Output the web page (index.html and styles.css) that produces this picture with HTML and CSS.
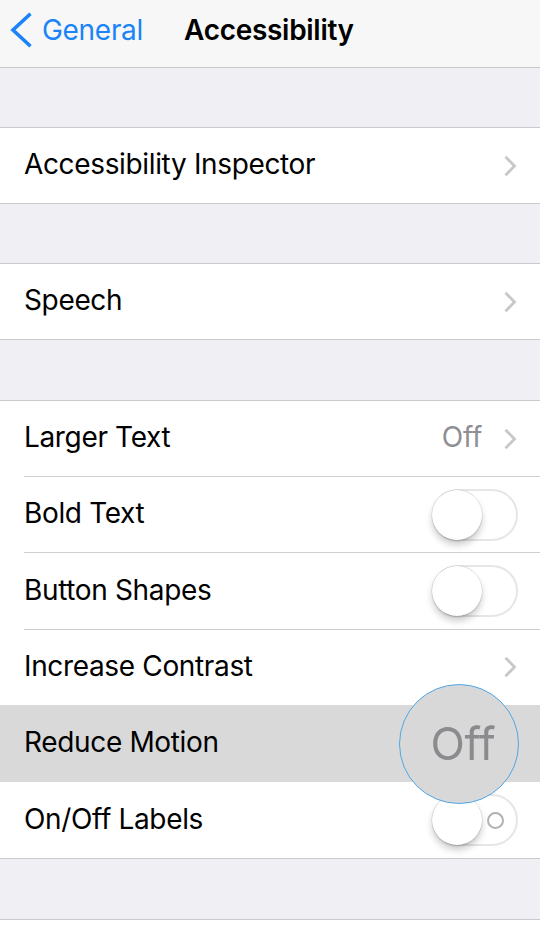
FILE: index.html
```html
<!DOCTYPE html>
<html lang="en">
<head>
<meta charset="utf-8">
<title>Accessibility</title>
<link rel="stylesheet" href="styles.css">
</head>
<body>
<div class="screen">
  <header class="nav">
    <a class="back">
      <svg class="back-chevron" width="24" height="36" viewBox="0 0 24 36"><polyline points="20.5,1.8 3,18 20.5,34.2" fill="none" stroke="#1a84f8" stroke-width="3.6" stroke-linecap="butt" stroke-linejoin="miter"/></svg>
      <span class="back-label">General</span>
    </a>
    <h1 class="title">Accessibility</h1>
  </header>

  <div class="spacer s1"></div>
  <section class="group">
    <div class="row"><span class="label">Accessibility Inspector</span><span class="chev"></span></div>
  </section>

  <div class="spacer s2"></div>
  <section class="group">
    <div class="row"><span class="label">Speech</span><span class="chev"></span></div>
  </section>

  <div class="spacer s3"></div>
  <section class="group">
    <div class="row"><span class="label">Larger Text</span><span class="detail">Off</span><span class="chev"></span></div>
    <div class="row"><span class="label">Bold Text</span><span class="toggle"><span class="knob"></span></span></div>
    <div class="row"><span class="label">Button Shapes</span><span class="toggle"><span class="knob"></span></span></div>
    <div class="row"><span class="label">Increase Contrast</span><span class="chev"></span></div>
    <div class="row selected"><span class="label">Reduce Motion</span>
      <div class="lens"><span class="lens-text">Off</span></div>
    </div>
    <div class="row"><span class="label">On/Off Labels</span><span class="toggle"><span class="knob"></span><span class="ring"></span></span></div>
  </section>

  <div class="spacer s4"></div>
  <div class="bottom"></div>
</div>
</body>
</html>
```

FILE: styles.css
```css
* { box-sizing: border-box; }

html, body {
  margin: 0;
  padding: 0;
  background: #efeff4;
}

.screen {
  width: 540px;
  height: 925px;
  overflow: hidden;
  font-family: Inter, "Noto Sans", "Liberation Sans", sans-serif;
  color: #000;
  background: #efeff4;
}

.nav {
  height: 68px;
  background: #f7f7f7;
  border-bottom: 1px solid #c9c9cc;
  display: flex;
  align-items: flex-start;
  padding-top: 12px;
  position: relative;
}

.back {
  display: flex;
  align-items: center;
  padding-left: 10px;
  height: 36px;
  color: #1a84f8;
}

.back-chevron { display: block; }

.back-label {
  font-size: 28px;
  letter-spacing: -0.3px;
  margin-left: 8px;
}

.title {
  margin: 0 0 0 41px;
  font-size: 28px;
  font-weight: 600;
  letter-spacing: -0.3px;
  line-height: 36px;
  height: 36px;
}

.spacer { height: 59px; }
.s3 { height: 60px; }
.s4 { height: 60px; }

.group {
  background: #fff;
  border-top: 1px solid #c9c9ce;
  border-bottom: 1px solid #c9c9ce;
}

.row {
  height: 75px;
  display: flex;
  align-items: center;
  padding-left: 24px;
  padding-right: 23px;
  position: relative;
}

.row + .row {
  height: 76.4px;
  padding-top: 1px;
  background: linear-gradient(#cfcfd3, #cfcfd3) 24px 0 / calc(100% - 24px) 1px no-repeat;
}

.row.selected {
  background: #d9d9d9;
}
.row.selected + .row { background: #fff; }

.label {
  flex: 1;
  font-size: 28px;
  letter-spacing: -0.35px;
  margin-bottom: 3px;
}

.detail {
  font-size: 28px;
  color: #8e8e93;
  letter-spacing: -0.3px;
  margin-right: 21px;
  margin-bottom: 3px;
}

.chev {
  width: 14px;
  height: 22px;
  background:
    no-repeat center / 14px 22px
    url("data:image/svg+xml;utf8,<svg xmlns='http://www.w3.org/2000/svg' width='14' height='22' viewBox='0 0 14 22'><polyline points='2.5,1.8 11.5,11 2.5,20.2' fill='none' stroke='%23c7c7cc' stroke-width='2.8'/></svg>");
}

.toggle {
  width: 86px;
  height: 52px;
  border-radius: 26px;
  border: 2.5px solid #e6e6e9;
  background: #fff;
  display: flex;
  align-items: center;
  margin-right: -1px;
  position: relative;
}

.knob {
  width: 50px;
  height: 50px;
  border-radius: 50%;
  background: #fff;
  margin-left: -2.5px;
  box-shadow: 0 5px 7px rgba(0, 0, 0, 0.2), 0 0 0 0.6px rgba(0, 0, 0, 0.12), 0 2px 1px rgba(0,0,0,0.06);
  flex: none;
}

.ring {
  width: 17px;
  height: 17px;
  border-radius: 50%;
  border: 2px solid #b1b1b5;
  margin-left: 5px;
  flex: none;
}

.lens {
  position: absolute;
  right: 21px;
  top: -21px;
  width: 120px;
  height: 120px;
  border-radius: 50%;
  border: 1.2px solid #4ea7ea;
  background: #d8d8d8;
  display: flex;
  align-items: center;
  justify-content: center;
  z-index: 5;
  overflow: hidden;
}

.lens-text {
  font-size: 45px;
  color: #8b8b8f;
  letter-spacing: -0.4px;
  margin-left: 8px;
  margin-top: -2px;
  filter: blur(0.5px);
}

.bottom {
  height: 6px;
  background: #fff;
  border-top: 1px solid #c9c9ce;
}
```
